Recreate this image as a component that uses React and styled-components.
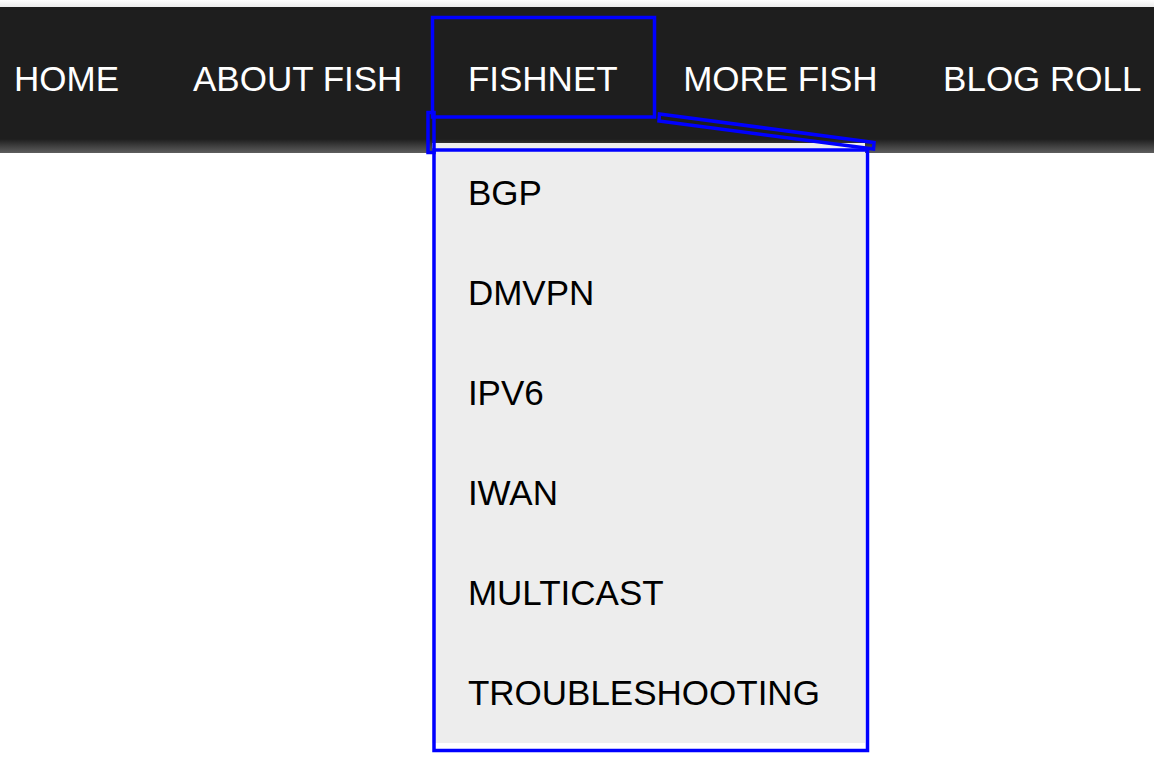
import styled, { createGlobalStyle } from "styled-components";

const GlobalStyle = createGlobalStyle`
  body {
    margin: 0;
    background: #fff;
    font-family: "Liberation Sans", Arial, Helvetica, sans-serif;
  }
`;

const navItems = ["HOME", "ABOUT FISH", "FISHNET", "MORE FISH", "BLOG ROLL"];
const fishnetItems = ["BGP", "DMVPN", "IPV6", "IWAN", "MULTICAST", "TROUBLESHOOTING"];

const App = () => {
  return (
    <Page>
      <GlobalStyle />
      <TopStrip />
      <NavBar>
        <NavList>
          {navItems.map((item) => (
            <NavItem key={item} $first={item === "HOME"}>
              <NavLink>{item}</NavLink>
              {item === "FISHNET" && (
                <Dropdown>
                  {fishnetItems.map((sub) => (
                    <DropItem key={sub}>{sub}</DropItem>
                  ))}
                </Dropdown>
              )}
            </NavItem>
          ))}
        </NavList>
      </NavBar>
      <Highlight width="1154" height="780" viewBox="0 0 1154 780">
        <rect x="432.5" y="17.5" width="222" height="99.5" />
        <rect x="428" y="112.5" width="6" height="40" />
        <polygon points="659.5,114 874,142.5 873.5,149 659,121" />
        <rect x="434" y="150" width="433.5" height="600.5" />
      </Highlight>
    </Page>
  );
};

export default App;

const Page = styled.div`
  position: relative;
  width: 1154px;
  height: 780px;
  overflow: hidden;
`;

const TopStrip = styled.div`
  height: 7px;
  background: linear-gradient(to bottom, #ffffff 0%, #ececec 100%);
`;

const NavBar = styled.nav`
  height: 146px;
  background: linear-gradient(
    to bottom,
    #1e1e1e 0,
    #1e1e1e calc(100% - 14px),
    #5e5e5e 100%
  );
  display: flex;
`;

const NavList = styled.ul`
  list-style: none;
  margin: 0;
  padding: 0 0 0 14px;
  display: flex;
  align-items: stretch;
  gap: 65.5px;
`;

const NavItem = styled.li`
  position: relative;
  display: flex;
  align-items: center;
  margin-right: ${(p) => (p.$first ? "8.5px" : "0")};
`;

const NavLink = styled.a`
  color: #ffffff;
  font-size: 35px;
  line-height: 1;
  margin-top: -3px;
  white-space: nowrap;
  text-decoration: none;
  cursor: pointer;
`;

const Dropdown = styled.ul`
  position: absolute;
  left: -36px;
  top: calc(100% - 10px);
  width: 433px;
  margin: 0;
  padding: 0;
  list-style: none;
  background: #ededed;
`;

const DropItem = styled.li`
  height: 100px;
  line-height: 100px;
  padding-left: 36px;
  font-size: 35px;
  color: #000;
  white-space: nowrap;
`;

const Highlight = styled.svg`
  position: absolute;
  left: 0;
  top: 0;
  pointer-events: none;
  fill: none;
  stroke: #0000ff;
  stroke-width: 3.5;
`;
